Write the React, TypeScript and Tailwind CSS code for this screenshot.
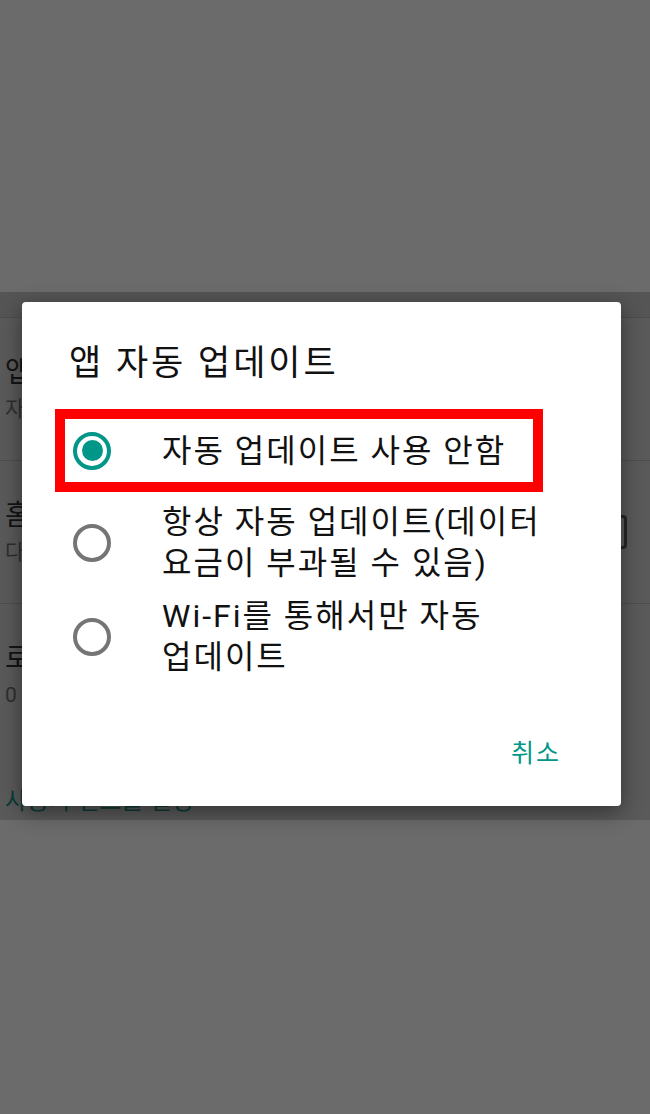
import React from "react";

const font = { fontFamily: 'Roboto, "Noto Sans CJK KR", sans-serif' };

function Radio({ checked }: { checked?: boolean }) {
    return (
        <div
            className={`w-[38px] h-[38px] shrink-0 rounded-full border-[4px] flex items-center justify-center ${
                checked ? "border-[#009688]" : "border-[#757575]"
            }`}
        >
            {checked && <div className="w-[21px] h-[21px] rounded-full bg-[#009688]" />}
        </div>
    );
}

function BackItem({ title, sub, box }: { title: string; sub: string; box?: boolean }) {
    return (
        <div className="h-[143px] border-b border-[#4d4d4d] flex items-center pl-[5px] pr-[23px]">
            <div className="flex-1 flex flex-col gap-[6px]">
                <span className="text-[28px] leading-[34px] text-[#141414]">{title}</span>
                <span className="text-[21px] leading-[26px] text-[#2f2f2f]">{sub}</span>
            </div>
            {box && <div className="w-[34px] h-[34px] rounded-[4px] border-[3px] border-[#262626]" />}
        </div>
    );
}

export default function App() {
    return (
        <div className="w-[650px] h-[1114px] bg-[#6b6b6b] flex flex-col" style={font}>
            <div className="h-[292px]" />

            {/* dimmed settings screen behind the dialog */}
            <div className="relative h-[528px] bg-[#5a5a5a] flex flex-col">
                <div className="h-[26px] bg-[#555555] border-b border-[#4d4d4d]" />
                <BackItem title="앱 자동 업데이트" sub="자동 업데이트 사용 안함" />
                <BackItem title="홈 화면에 아이콘 추가" sub="다운로드한 새 앱의 경우" box />
                <div className="flex flex-col gap-[6px] pl-[5px] pt-[38px]">
                    <span className="text-[28px] leading-[34px] text-[#141414]">로컬 검색 기록 삭제</span>
                    <span className="text-[21px] leading-[26px] text-[#2f2f2f]">0</span>
                </div>
                <div className="pl-[5px] pt-[78px] text-[24px] leading-[30px] text-[#0b3d36]">사용자 컨트롤 설정</div>

                {/* dialog */}
                <div className="absolute left-[22px] top-[10px] w-[599px] h-[504px] bg-white rounded-[4px] shadow-[0_6px_22px_rgba(0,0,0,0.45)] flex flex-col">
                    <div className="pl-[47px] pt-[38px] text-[35px] leading-[48px] tracking-[3px] text-[#111]">앱 자동 업데이트</div>

                    <div className="relative mt-[21px] flex flex-col">
                        <div className="absolute left-[33px] top-0 w-[488px] h-[83px] border-[10px] border-[#ff0000]" />
                        <div className="h-[83px] flex items-center pl-[51px]">
                            <Radio checked />
                            <span className="ml-[51px] text-[32px] leading-[42px] tracking-[2px] text-[#111]">자동 업데이트 사용 안함</span>
                        </div>
                        <div className="mt-[10px] flex items-center pl-[51px]">
                            <Radio />
                            <span className="ml-[51px] w-[395px] break-keep text-[32px] leading-[41px] tracking-[2px] text-[#111]">
                                항상 자동 업데이트(데이터 요금이 부과될 수 있음)
                            </span>
                        </div>
                        <div className="mt-[12px] flex items-center pl-[51px]">
                            <Radio />
                            <span className="ml-[51px] w-[395px] break-keep text-[32px] leading-[41px] tracking-[2px] text-[#111]">
                                Wi-Fi를 통해서만 자동 업데이트
                            </span>
                        </div>
                    </div>

                    <div className="flex justify-end pr-[60px] mt-[60px]">
                        <span className="text-[25px] leading-[32px] tracking-[2px] text-[#009688]">취소</span>
                    </div>
                </div>
            </div>

            <div className="flex-1" />
        </div>
    );
}
